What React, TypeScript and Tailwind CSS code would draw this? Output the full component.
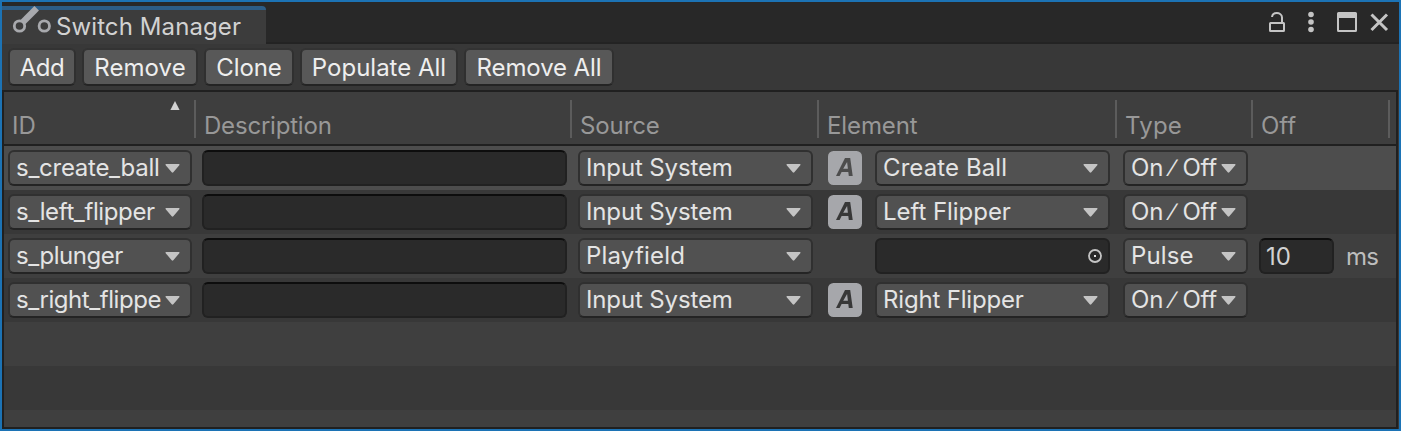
import type { ReactNode } from "react";

function Caret() {
  return (
    <svg width="15" height="9" viewBox="0 0 15 9" className="-ml-3 shrink-0">
      <path d="M1.2 0h12.6c.8 0 1 .7.5 1.2L8.3 8.3a1.1 1.1 0 0 1-1.6 0L.7 1.2C.2.7.4 0 1.2 0Z" fill="#c4c4c4" />
    </svg>
  );
}

function Dropdown({ label, className }: { label: string; className: string }) {
  return (
    <div className={`flex h-9 items-center justify-between rounded-md border-2 border-t-[#303030] border-x-[#303030] border-b-[#242424] bg-[#515151] pr-[10px] pl-[6px] text-[#e4e4e4] ${className}`}>
      <span className="min-w-0 flex-1 whitespace-nowrap leading-8">{label}</span>
      <Caret />
    </div>
  );
}

function Field({ className, children }: { className: string; children?: ReactNode }) {
  return (
    <div className={`flex h-9 items-center rounded-md border-2 border-x-[#212121] border-b-[#212121] bg-[#2a2a2a] ${className}`}>
      {children}
    </div>
  );
}

function ActionIcon({ letter }: { letter: string }) {
  return (
    <svg width="34" height="34" viewBox="0 0 34 34" className="ml-[15px] shrink-0">
      <rect width="34" height="34" rx="5.5" fill="#a6a7ab" />
      <path d="M8 25 17 7h5.200L24.700 25h-3.900l-.5-4h-6.700l-2 4ZM15.200 17.800h4.700l-.8-6.700Z" fill={letter} fillRule="evenodd" />
    </svg>
  );
}

function ToolButton({ label, className }: { label: string; className: string }) {
  return (
    <button className={`h-[38px] rounded-md border-2 border-t-[#333333] border-x-[#303030] border-b-[#242424] bg-[#585858] pt-px text-center leading-[33px] whitespace-nowrap text-[#eeeeee] ${className}`}>
      {label}
    </button>
  );
}

function HeaderCell({ label, className, sorted }: { label: string; className: string; sorted?: boolean }) {
  return (
    <div className={`flex h-[38px] shrink-0 justify-between border-r-2 border-[#5c5c5c] ${className}`}>
      <span className="pt-[10px] leading-8">{label}</span>
      {sorted && (
        <svg width="10" height="9" viewBox="0 0 10 9" className="mt-[1px] mr-[14px]">
          <path d="M5 0 9.6 9H.4Z" fill="#d2d2d2" />
        </svg>
      )}
    </div>
  );
}

type Row = { id: string; idSpacing: string; source: string; sourceSpacing: string; element?: string; elementSpacing?: string; type: string; off?: string };

const rows: Row[] = [
  { id: "s_create_ball", idSpacing: "tracking-[-0.27px]", source: "Input System", sourceSpacing: "tracking-[-0.13px]", element: "Create Ball", elementSpacing: "tracking-[0.1px]", type: "On ∕ Off" },
  { id: "s_left_flipper", idSpacing: "tracking-[-0.38px]", source: "Input System", sourceSpacing: "tracking-[-0.13px]", element: "Left Flipper", elementSpacing: "tracking-[-0.05px]", type: "On ∕ Off" },
  { id: "s_plunger", idSpacing: "tracking-[-0.46px]", source: "Playfield", sourceSpacing: "tracking-[0.2px]", type: "Pulse", off: "10" },
  { id: "s_right_flippe", idSpacing: "tracking-[-0.45px]", source: "Input System", sourceSpacing: "tracking-[-0.13px]", element: "Right Flipper", elementSpacing: "tracking-[-0.18px]", type: "On ∕ Off" },
];

const rowColors = ["bg-[#4d4d4d]", "bg-[#383838]", "bg-[#3f3f3f]", "bg-[#383838]"];

export default function App() {
  return (
    <div className="flex h-[431px] w-[1401px] flex-col overflow-hidden border-2 border-[#1c73b5] bg-[#383838] font-['Inter',sans-serif] text-[24px]">
      <div className="flex h-[42px] shrink-0 items-end justify-between bg-[#282828]">
        <div className="flex h-[38px] w-[264px] rounded-tr-[4px] border-t-4 border-[#2c5d87] bg-[#3c3c3c]">
          <svg width="40" height="28" viewBox="0 0 40 28" className="-mt-[4px] ml-[10px] shrink-0">
            <path d="M10 17 24.700 2.300" stroke="#a8a9ad" strokeWidth="6.400" fill="none" />
            <circle cx="7.5" cy="20" r="5.2" stroke="#a8a9ad" strokeWidth="2.8" fill="#3c3c3c" />
            <circle cx="32.3" cy="20" r="5.2" stroke="#a8a9ad" strokeWidth="2.8" fill="none" />
          </svg>
          <span className="ml-[4px] pt-[1px] leading-8 tracking-[0.1px] whitespace-nowrap text-[#d2d2d2]">Switch Manager</span>
        </div>
        <div className="flex h-[38px] flex-1 justify-end border-b-2 border-[#232323]">
          <svg width="132" height="32" viewBox="1267 6 132 32" className="shrink-0">
            <g fill="none" stroke="#c4c4c4" strokeWidth="2">
              <rect x="1270" y="23" width="14" height="8" rx="0.5" />
              <path d="M1272 17c.3-2.5 2.3-4 4.8-4s5.2 1.700 5.200 4.500V23" />
              <rect x="1338" y="13" width="18" height="18" rx="0.5" />
              <path d="M1338 15.500H1356" strokeWidth="5" />
              <path d="M1371.500 14.500 1387 30M1387 14.500 1371.500 30" strokeWidth="3" />
            </g>
            <g fill="#c4c4c4">
              <circle cx="1311" cy="14.500" r="2.800" />
              <circle cx="1311" cy="22" r="2.800" />
              <circle cx="1311" cy="29.500" r="2.800" />
            </g>
          </svg>
        </div>
      </div>

      <div className="flex h-[46px] shrink-0 gap-[6px] pt-[4px] pl-[6px]">
        <ToolButton label="Add" className="w-[68px] tracking-[-0.4px]" />
        <ToolButton label="Remove" className="w-[116px] tracking-[0.05px]" />
        <ToolButton label="Clone" className="w-[90px] tracking-[-0.1px]" />
        <ToolButton label="Populate All" className="w-[158px]" />
        <ToolButton label="Remove All" className="w-[150px] tracking-[-0.1px]" />
      </div>

      <div className="mr-px flex h-[339px] shrink-0 flex-col overflow-hidden border-2 border-[#202020] bg-[#3f3f3f]">
        <div className="flex h-[54px] shrink-0 border-b-2 border-[#202020] bg-[#3e3e3e] pt-2 text-[#989898]">
          <HeaderCell label="ID" className="w-[192px] pl-[8px]" sorted />
          <HeaderCell label="Description" className="w-[376px] pl-[8px] tracking-[-0.2px]" />
          <HeaderCell label="Source" className="w-[247px] pl-[8px] tracking-[-0.1px]" />
          <HeaderCell label="Element" className="w-[298px] pl-[8px] tracking-[-0.1px]" />
          <HeaderCell label="Type" className="w-[136px] pl-[8px] tracking-[0.2px]" />
          <HeaderCell label="Off" className="w-[137px] pl-[8px]" />
        </div>
        {rows.map((row, i) => (
          <div key={row.id} className={`flex h-11 shrink-0 items-center pl-[4px] ${rowColors[i]}`}>
            <Dropdown label={row.id} className={`w-[184px] ${row.idSpacing}`} />
            <Field className="ml-[10px] w-[365px] border-t-[#0d0d0d]" />
            <Dropdown label={row.source} className={`ml-[11px] w-[235px] ${row.sourceSpacing}`} />
            {row.element ? (
              <>
                <ActionIcon letter={i === 0 ? "#4d4d4d" : "#383838"} />
                <Dropdown label={row.element} className={`ml-[13px] w-[235px] ${row.elementSpacing}`} />
              </>
            ) : (
              <Field className="ml-[62px] w-[235px] justify-end border-t-[#212121] pr-[6px]">
                <svg width="14" height="14" viewBox="0 0 14 14">
                  <circle cx="7" cy="7" r="6" fill="none" stroke="#c4c4c4" strokeWidth="1.8" />
                  <rect x="6" y="6" width="2" height="2" fill="#e4e4e4" />
                </svg>
              </Field>
            )}
            <Dropdown label={row.type} className={`ml-[13px] w-[125px] ${row.off ? "tracking-[0.1px]" : "tracking-[-0.2px] [word-spacing:1.2px]"}`} />
            {row.off && (
              <>
                <Field className="ml-[11px] w-[75px] border-t-[#0d0d0d] pl-[5px] text-[#d2d2d2]"><span className="pt-px">{row.off}</span></Field>
                <span className="ml-[12px] pt-px tracking-[-0.8px] text-[#bdbdbd]">ms</span>
              </>
            )}
          </div>
        ))}
        <div className="h-11 shrink-0 bg-[#3f3f3f]" />
        <div className="h-11 shrink-0 bg-[#383838]" />
      </div>
    </div>
  );
}
